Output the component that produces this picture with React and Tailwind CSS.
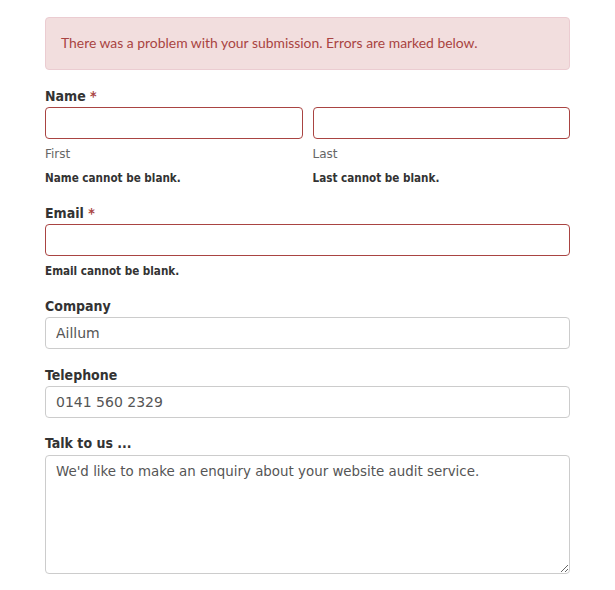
export default function App() {
  const label = "block text-[14px] leading-[20px] font-bold text-[#333] [font-family:'DejaVu_Sans_Condensed','DejaVu_Sans',sans-serif]";
  const field = "block w-full h-[32px] rounded-[4px] border bg-white px-[10px] text-[14px] text-[#555] [font-family:'DejaVu_Sans',sans-serif] outline-none";
  const help = "text-[12px] leading-[16px] text-[#666] [font-family:'DejaVu_Sans',sans-serif]";
  const err = "text-[11.6px] leading-[16px] font-bold text-[#333] [font-family:'DejaVu_Sans_Condensed','DejaVu_Sans',sans-serif]";

  return (
    <div className="min-h-[590px] bg-white pt-[17px] pl-[45px] pr-[45px]">
      <div className="h-[53px] flex items-center rounded-[4px] border border-[#ebccd1] bg-[#f2dede] px-[15px] text-[13.9px] text-[#a94442] [font-family:Lato,sans-serif]">
        There was a problem with your submission. Errors are marked below.
      </div>

      <label className={`${label} mt-[16px]`}>
        Name <span className="text-[#a94442]">*</span>
      </label>
      <div className="mt-[1px] grid grid-cols-2 gap-[10px]">
        <div>
          <input className={`${field} border-[#a94442]`} />
          <div className={`${help} mt-[7px]`}>First</div>
          <div className={`${err} mt-[8px]`}>Name cannot be blank.</div>
        </div>
        <div>
          <input className={`${field} border-[#a94442]`} />
          <div className={`${help} mt-[7px]`}>Last</div>
          <div className={`${err} mt-[8px]`}>Last cannot be blank.</div>
        </div>
      </div>

      <label className={`${label} mt-[17px]`}>
        Email <span className="text-[#a94442]">*</span>
      </label>
      <input className={`${field} mt-[1px] border-[#a94442]`} />
      <div className={`${err} mt-[7px]`}>Email cannot be blank.</div>

      <label className={`${label} mt-[17px]`}>Company</label>
      <input className={`${field} mt-[1px] border-[#ccc]`} defaultValue="Aillum" />

      <label className={`${label} mt-[16px]`}>Telephone</label>
      <input className={`${field} mt-[1px] border-[#ccc]`} defaultValue="0141 560 2329" />

      <label className={`${label} mt-[15px]`}>Talk to us ...</label>
      <textarea
        className="mt-[2px] block w-full h-[119px] rounded-[4px] border border-[#ccc] bg-white px-[10px] py-[6px] text-[13.4px] text-[#555] [font-family:'DejaVu_Sans',sans-serif] outline-none"
        defaultValue="We'd like to make an enquiry about your website audit service."
      />
    </div>
  );
}
